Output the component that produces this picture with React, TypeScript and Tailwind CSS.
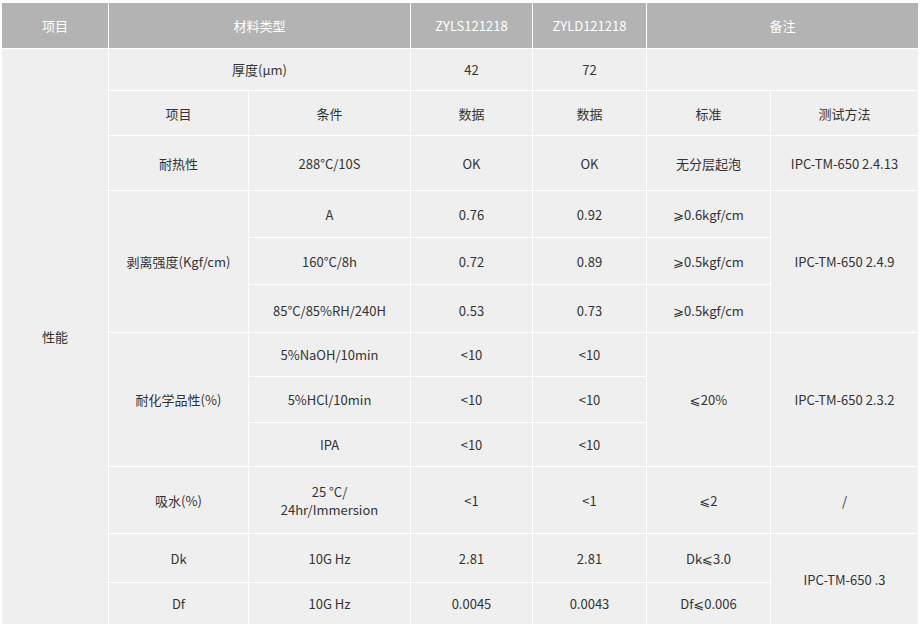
import React from "react";

type CellProps = {
  className?: string;
  head?: boolean;
  children?: React.ReactNode;
};

function Cell({ className = "", head = false, children }: CellProps) {
  return (
    <div
      className={`flex items-center justify-center text-center ${
        head ? "bg-[#b3b3b3] text-white" : "bg-[#efefef] text-[#333333]"
      } ${className}`}
    >
      {children}
    </div>
  );
}

export default function App() {
  return (
    <div className="w-[920px] h-[627px] bg-white pt-[3px] pl-[2px]">
      <div
        className="grid w-[916px] gap-px bg-white text-[13px] leading-[17px] grid-cols-[106px_139px_161px_121px_113px_123px_147px] grid-rows-[45px_41px_44px_54px_46px_46px_47px_43px_45px_43px_66px_48px_41px]"
        style={{ fontFamily: '"Noto Sans CJK SC", "Noto Sans", "DejaVu Sans", sans-serif' }}
      >
        {/* header */}
        <Cell head className="col-start-1 row-start-1">项目</Cell>
        <Cell head className="col-start-2 col-span-2 row-start-1">材料类型</Cell>
        <Cell head className="col-start-4 row-start-1">ZYLS121218</Cell>
        <Cell head className="col-start-5 row-start-1">ZYLD121218</Cell>
        <Cell head className="col-start-6 col-span-2 row-start-1">备注</Cell>

        <Cell className="col-start-1 row-start-2 row-span-12">性能</Cell>

        {/* thickness */}
        <Cell className="col-start-2 col-span-2 row-start-2">厚度(μm)</Cell>
        <Cell className="col-start-4 row-start-2">42</Cell>
        <Cell className="col-start-5 row-start-2">72</Cell>
        <Cell className="col-start-6 col-span-2 row-start-2" />

        {/* sub header */}
        <Cell className="col-start-2 row-start-3">项目</Cell>
        <Cell className="col-start-3 row-start-3">条件</Cell>
        <Cell className="col-start-4 row-start-3">数据</Cell>
        <Cell className="col-start-5 row-start-3">数据</Cell>
        <Cell className="col-start-6 row-start-3">标准</Cell>
        <Cell className="col-start-7 row-start-3">测试方法</Cell>

        {/* heat resistance */}
        <Cell className="col-start-2 row-start-4">耐热性</Cell>
        <Cell className="col-start-3 row-start-4">288°C/10S</Cell>
        <Cell className="col-start-4 row-start-4">OK</Cell>
        <Cell className="col-start-5 row-start-4">OK</Cell>
        <Cell className="col-start-6 row-start-4">无分层起泡</Cell>
        <Cell className="col-start-7 row-start-4">IPC-TM-650 2.4.13</Cell>

        {/* peel strength */}
        <Cell className="col-start-2 row-start-5 row-span-3">剥离强度(Kgf/cm)</Cell>
        <Cell className="col-start-3 row-start-5">A</Cell>
        <Cell className="col-start-4 row-start-5">0.76</Cell>
        <Cell className="col-start-5 row-start-5">0.92</Cell>
        <Cell className="col-start-6 row-start-5">⩾0.6kgf/cm</Cell>
        <Cell className="col-start-7 row-start-5 row-span-3">IPC-TM-650 2.4.9</Cell>

        <Cell className="col-start-3 row-start-6">160°C/8h</Cell>
        <Cell className="col-start-4 row-start-6">0.72</Cell>
        <Cell className="col-start-5 row-start-6">0.89</Cell>
        <Cell className="col-start-6 row-start-6">⩾0.5kgf/cm</Cell>

        <Cell className="col-start-3 row-start-7 pt-[3px]">85°C/85%RH/240H</Cell>
        <Cell className="col-start-4 row-start-7 pt-[3px]">0.53</Cell>
        <Cell className="col-start-5 row-start-7 pt-[3px]">0.73</Cell>
        <Cell className="col-start-6 row-start-7 pt-[3px]">⩾0.5kgf/cm</Cell>

        {/* chemical resistance */}
        <Cell className="col-start-2 row-start-8 row-span-3">耐化学品性(%)</Cell>
        <Cell className="col-start-3 row-start-8">5%NaOH/10min</Cell>
        <Cell className="col-start-4 row-start-8">&lt;10</Cell>
        <Cell className="col-start-5 row-start-8">&lt;10</Cell>
        <Cell className="col-start-6 row-start-8 row-span-3">⩽20%</Cell>
        <Cell className="col-start-7 row-start-8 row-span-3">IPC-TM-650 2.3.2</Cell>

        <Cell className="col-start-3 row-start-9">5%HCl/10min</Cell>
        <Cell className="col-start-4 row-start-9">&lt;10</Cell>
        <Cell className="col-start-5 row-start-9">&lt;10</Cell>

        <Cell className="col-start-3 row-start-10">IPA</Cell>
        <Cell className="col-start-4 row-start-10">&lt;10</Cell>
        <Cell className="col-start-5 row-start-10">&lt;10</Cell>

        {/* water absorption */}
        <Cell className="col-start-2 row-start-11">吸水(%)</Cell>
        <Cell className="col-start-3 row-start-11 flex-col gap-px leading-[17px]">
          <span>25 °C/</span>
          <span>24hr/Immersion</span>
        </Cell>
        <Cell className="col-start-4 row-start-11">&lt;1</Cell>
        <Cell className="col-start-5 row-start-11">&lt;1</Cell>
        <Cell className="col-start-6 row-start-11">⩽2</Cell>
        <Cell className="col-start-7 row-start-11">/</Cell>

        {/* Dk / Df */}
        <Cell className="col-start-2 row-start-12">Dk</Cell>
        <Cell className="col-start-3 row-start-12">10G Hz</Cell>
        <Cell className="col-start-4 row-start-12">2.81</Cell>
        <Cell className="col-start-5 row-start-12">2.81</Cell>
        <Cell className="col-start-6 row-start-12">Dk⩽3.0</Cell>
        <Cell className="col-start-7 row-start-12 row-span-2">IPC-TM-650 .3</Cell>

        <Cell className="col-start-2 row-start-13">Df</Cell>
        <Cell className="col-start-3 row-start-13">10G Hz</Cell>
        <Cell className="col-start-4 row-start-13">0.0045</Cell>
        <Cell className="col-start-5 row-start-13">0.0043</Cell>
        <Cell className="col-start-6 row-start-13">Df⩽0.006</Cell>
      </div>
    </div>
  );
}
